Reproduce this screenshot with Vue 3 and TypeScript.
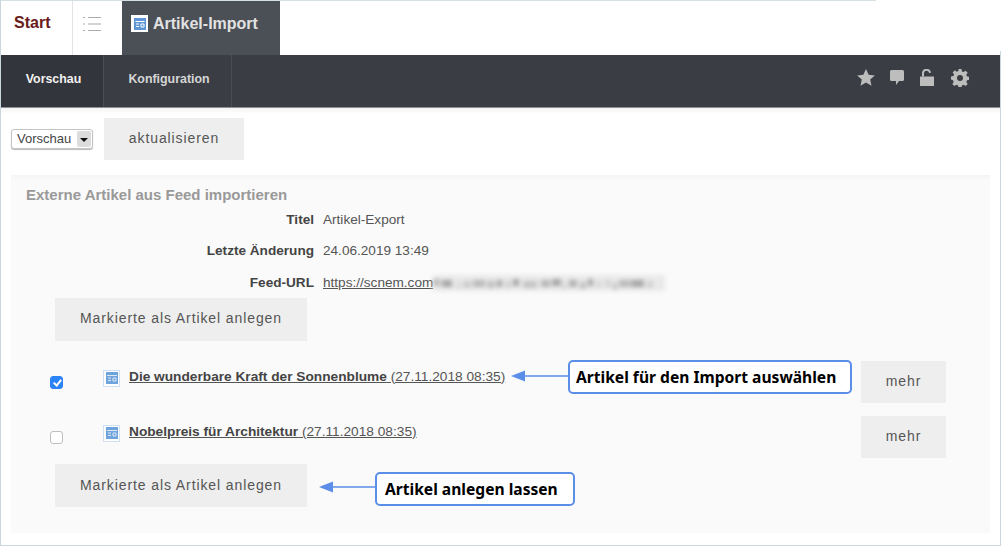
<script setup lang="ts">
const blurs: [number, number, number, number][] = [
  [0, 7, 0.35, 4], [9, 10, 0.5, 5], [24, 3, 0.15, 7], [30, 8, 0.22, 6], [40, 12, 0.36, 5], [54, 8, 0.3, 6], [64, 5, 0.5, 5], [72, 6, 0.18, 6],
  [80, 6, 0.5, 4], [90, 14, 0.28, 6], [108, 9, 0.38, 5], [119, 9, 0.5, 4], [130, 3, 0.18, 8], [136, 8, 0.42, 5],
  [147, 6, 0.3, 7], [155, 5, 0.5, 4], [163, 5, 0.12, 6], [172, 6, 0.15, 5], [180, 4, 0.28, 8], [186, 11, 0.36, 5], [198, 13, 0.5, 5],
  [214, 6, 0.18, 6]
]
const facts = [
  { label: 'Titel', value: 'Artikel-Export' },
  { label: 'Letzte Änderung', value: '24.06.2019 13:49' }
]
const items = [
  { title: 'Die wunderbare Kraft der Sonnenblume', date: '(27.11.2018 08:35)', checked: true },
  { title: 'Nobelpreis für Architektur', date: '(27.11.2018 08:35)', checked: false }
]
</script>

<template>
  <div class="frame">
    <header class="tabs">
      <div class="tab-start">Start</div>
      <div class="tab-list">
        <svg width="18" height="16" viewBox="0 0 18 16" fill="none" stroke="#a9a9a9" stroke-width="1">
          <path d="M0 1.500h2M5 1.500h13M0 8h2M5 8h13M0 14.500h2M5 14.500h13" />
        </svg>
      </div>
      <div class="tab-active">
        <span class="tab-icon">
          <svg width="12" height="12" viewBox="0 0 12 12"><rect width="12" height="12" fill="#5f97d6" /><path d="M1.500 3.500h9M2 6h3M2 8.500h3M7 6h3v3H7z" stroke="#fff" stroke-width="1" fill="none" /></svg>
        </span>
        Artikel-Import
      </div>
    </header>

    <nav class="nav">
      <div class="nav-item current">Vorschau</div>
      <div class="nav-item">Konfiguration</div>
      <div class="nav-icons">
        <svg width="18" height="17" viewBox="0 0 18 17"><path d="M9 0l2.600 5.700 6.200.7-4.600 4.200 1.300 6.100L9 13.600l-5.500 3.100 1.300-6.100L.2 6.400l6.200-.7z" fill="#bdbdbd" /></svg>
        <svg width="16" height="17" viewBox="0 0 16 17"><path d="M2.500 1h11A1.500 1.500 0 0 1 15 2.500v8a1.500 1.500 0 0 1-1.500 1.500H10l-3 4v-4H2.500A1.500 1.500 0 0 1 1 10.500v-8A1.500 1.500 0 0 1 2.500 1z" fill="#bdbdbd" /></svg>
        <svg width="16" height="18" viewBox="0 0 16 18"><path d="M1 7.500h14V17H1z" fill="#bdbdbd" /><path d="M4 7.500V4.500a3.500 3.500 0 0 1 7-.6" fill="none" stroke="#bdbdbd" stroke-width="2" /></svg>
        <svg class="gear" width="18" height="18" viewBox="0 0 18 18"><path d="M7.500 0h3l.4 2.400 1.700.7 2-1.400 2.100 2.100-1.400 2 .7 1.700 2.400.4v3l-2.400.4-.7 1.700 1.400 2-2.100 2.100-2-1.400-1.700.7-.4 2.400h-3l-.4-2.400-1.700-.7-2 1.400-2.100-2.100 1.400-2-.7-1.700L0 10.500v-3l2.400-.4.700-1.700-1.400-2 2.100-2.100 2 1.400 1.700-.7z" fill="#bdbdbd" /><circle cx="9" cy="9" r="3" fill="#3a3d44" /></svg>
      </div>
    </nav>

    <main class="content">
      <div class="toolbar">
        <div class="select">
          <span class="select-text">Vorschau</span>
          <span class="select-arrow"></span>
        </div>
        <div class="btn btn-update">aktualisieren</div>
      </div>

      <section class="panel">
        <h2 class="panel-title">Externe Artikel aus Feed importieren</h2>
        <div v-for="f in facts" :key="f.label" class="fact">
          <span class="fact-label">{{ f.label }}</span>
          <span class="fact-value">{{ f.value }}</span>
        </div>
        <div class="fact fact-url">
          <span class="fact-label">Feed-URL</span>
          <span class="fact-value url">
            <u>https://scnem.com</u>
            <span class="blurred">
              <i v-for="(b, i) in blurs" :key="i" :style="{ left: b[0] + 'px', width: b[1] + 'px', opacity: b[2], top: b[3] + 'px' }"></i>
            </span>
          </span>
        </div>

        <div class="btn btn-create first">Markierte als Artikel anlegen</div>

        <div v-for="(item, i) in items" :key="i" class="item" :class="{ second: i === 1 }">
          <input class="check" type="checkbox" :checked="item.checked" />
          <span class="item-icon">
            <svg width="12" height="12" viewBox="0 0 12 12"><rect width="12" height="12" fill="#6fa3dc" /><path d="M1 3.500h10M2 6h3M2 8.500h3M7 6h3v3H7z" stroke="#dbe8f6" stroke-width="1" fill="none" /></svg>
          </span>
          <a class="item-link"><b>{{ item.title }}</b> {{ item.date }}</a>
          <div class="btn btn-more">mehr</div>
        </div>

        <div class="btn btn-create last">Markierte als Artikel anlegen</div>
      </section>
    </main>

    <div class="callout c1">Artikel für den Import auswählen</div>
    <svg class="arrow a1" width="58" height="12" viewBox="0 0 58 12"><path d="M0 6l14-5.500v11z" fill="#5b8ee8" /><path d="M12 6h46" stroke="#5b8ee8" stroke-width="1.500" /></svg>
    <div class="callout c2">Artikel anlegen lassen</div>
    <svg class="arrow a2" width="56" height="12" viewBox="0 0 56 12"><path d="M0 6l14-5.500v11z" fill="#5b8ee8" /><path d="M12 6h44" stroke="#5b8ee8" stroke-width="1.500" /></svg>
  </div>
</template>

<style>
html, body { margin: 0; background: #fff; }
</style>

<style scoped>
.frame {
  position: relative;
  width: 1001px;
  height: 546px;
  box-sizing: border-box;
  overflow: hidden;
  background: #fff;
  border-left: 1px solid #c9d8de;
  border-bottom: 1px solid #c9d8de;
  font-family: "Liberation Sans", Arial, sans-serif;
  color: #444;
}
.frame::before {
  content: "";
  position: absolute;
  left: 0;
  top: 0;
  width: 875px;
  height: 1px;
  background: #d5e0e4;
}
.frame::after {
  content: "";
  position: absolute;
  right: 0;
  top: 51px;
  bottom: 0;
  width: 1px;
  background: #c9d8de;
}
.tabs {
  display: flex;
  height: 55px;
  box-sizing: border-box;
  padding-top: 1px;
}
.tab-start {
  width: 72px;
  box-sizing: border-box;
  padding: 13px 0 0 13px;
  font-size: 16px;
  font-weight: 700;
  color: #6a1a1a;
  border-right: 1px solid #e4e4e4;
}
.tab-list {
  width: 49px;
  box-sizing: border-box;
  padding: 15px 0 0 10px;
}
.tab-active {
  width: 158px;
  display: flex;
  align-items: flex-start;
  gap: 5px;
  box-sizing: border-box;
  padding: 14px 0 0 9px;
  background: #4b5057;
  color: #e2e2e2;
  font-size: 16px;
  font-weight: 700;
}
.tab-icon {
  width: 17px;
  height: 17px;
  background: #fff;
  display: flex;
  align-items: center;
  justify-content: center;
  flex: none;
}
.nav {
  display: flex;
  align-items: stretch;
  height: 53px;
  background: #3a3d44;
  font-size: 12.400px;
  font-weight: 700;
  color: #d5d5d5;
  border-bottom: 1px solid #8f9196;
  box-sizing: border-box;
}
.nav-item {
  display: flex;
  align-items: center;
  justify-content: center;
  width: 128px;
  padding: 0 0 4px 3px;
  box-sizing: border-box;
  border-right: 1px solid #4a4d53;
}
.nav-item.current {
  width: 103px;
  background: #32353b;
  color: #f2f2f2;
}
.nav-icons {
  margin-left: auto;
  display: flex;
  align-items: center;
  gap: 14px;
  padding: 0 32px 7px 0;
}
.gear { margin-left: 2px; }
.content {
  padding: 10px 10px 0;
  background: linear-gradient(#f4f4f4, #fff 6px);
}
.toolbar {
  display: flex;
  align-items: center;
  gap: 11px;
}
.select {
  width: 82px;
  height: 20px;
  box-sizing: border-box;
  display: flex;
  align-items: center;
  justify-content: space-between;
  background: #fff;
  border: 1px solid #c4c4c4;
  border-radius: 3px;
  box-shadow: 0 1px 1px #bbb;
  font-size: 13px;
  color: #444;
  padding: 0 1px 1px 5px;
}
.select-arrow {
  width: 14px;
  height: 16px;
  margin-top: 1px;
  background: #dcdcdc;
  border-radius: 2px;
  position: relative;
  flex: none;
}
.select-arrow::after {
  content: "";
  position: absolute;
  left: 3px;
  top: 7px;
  border: 4px solid transparent;
  border-top: 4px solid #111;
  border-bottom: 0;
}
.btn {
  display: flex;
  align-items: center;
  justify-content: center;
  background: #eeeeee;
  color: #555;
  font-size: 14px;
  letter-spacing: 0.9px;
  padding-bottom: 2px;
  box-sizing: border-box;
}
.btn-update {
  width: 140px;
  height: 42px;
}
.panel {
  width: 979px;
  height: 358px;
  margin-top: 15px;
  padding: 12px 0 0 15px;
  box-sizing: border-box;
  background: #fafafa;
  box-shadow: inset 0 6px 6px -6px #eee;
}
.panel-title {
  margin: 0 0 9px;
  font-size: 15px;
  line-height: 16px;
  font-weight: 700;
  color: #999;
}
.fact {
  display: flex;
  gap: 9px;
  height: 31px;
  align-items: flex-start;
  font-size: 13.600px;
  line-height: 16px;
}
.fact-url {
  height: 22.500px;
  margin-top: 1px;
}
.fact-label {
  width: 288px;
  text-align: right;
  font-weight: 700;
  color: #444;
}
.fact-value { color: #555; }
.url { display: flex; }
.blurred {
  position: relative;
  display: block;
  width: 232px;
  height: 16px;
  background: #e9e9e9;
  filter: blur(2px);
}
.blurred i {
  position: absolute;
  height: 7px;
  background: #666;
}
.btn-create {
  width: 252px;
  height: 43px;
}
.btn-create.first { margin: 0 0 0 29px; }
.btn-create.last { margin: 6px 0 0 29px; padding-bottom: 1px; }
.item {
  display: flex;
  align-items: flex-start;
  height: 42px;
  margin-top: 20px;
  position: relative;
}
.item.second { margin-top: 13px; }
.check {
  appearance: none;
  position: relative;
  box-sizing: border-box;
  width: 13px;
  height: 13px;
  margin: 15px 0 0 24px;
  background: #fff;
  border: 1px solid #bdbdbd;
  border-radius: 3px;
  flex: none;
}
.check:checked {
  background: #2b84f7;
  border-color: #2b84f7;
}
.check:checked::after {
  content: "";
  position: absolute;
  left: 3.500px;
  top: 1px;
  width: 3px;
  height: 6px;
  border: solid #fff;
  border-width: 0 2px 2px 0;
  transform: rotate(40deg);
}
.item-icon {
  width: 15px;
  height: 15px;
  margin: 9px 0 0 40px;
  border: 1px solid #cfe0f2;
  display: flex;
  align-items: center;
  justify-content: center;
  flex: none;
  background: #fff;
}
.item-link {
  margin: 8px 0 0 9px;
  font-size: 13.700px;
  line-height: 16px;
  color: #555;
  text-decoration: underline;
}
.item-link b { color: #444; }
.btn-more {
  position: absolute;
  left: 835px;
  top: 0;
  width: 85px;
  height: 42px;
}
.callout {
  position: absolute;
  box-sizing: border-box;
  display: flex;
  align-items: center;
  background: #fff;
  border: 2px solid #5b8ee8;
  border-radius: 5px;
  padding-left: 6px;
  height: 34px;
  font-family: "Noto Sans", sans-serif;
  font-size: 15.600px;
  font-weight: 700;
  color: #000;
}
.c1 { left: 567px; top: 360px; width: 284px; }
.c2 { left: 374px; top: 472px; width: 200px; padding-left: 8px; }
.arrow { position: absolute; }
.a1 { left: 510px; top: 370px; }
.a2 { left: 318px; top: 481px; }
</style>
